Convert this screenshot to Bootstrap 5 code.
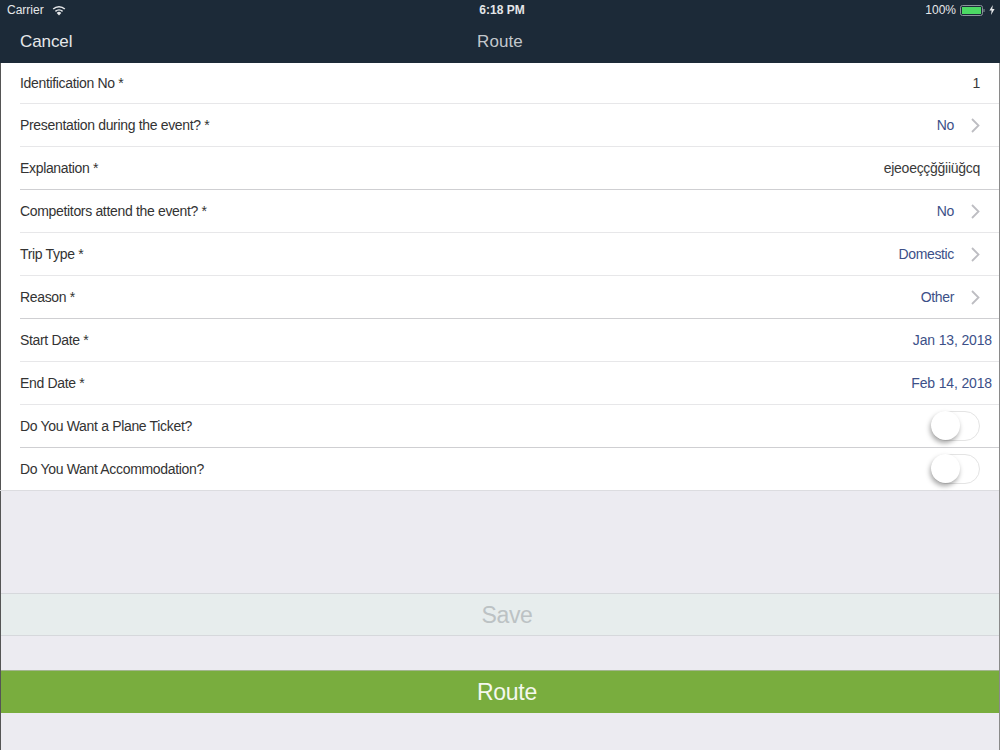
<!DOCTYPE html>
<html lang="en">
<head>
    <meta charset="UTF-8">
    <meta name="viewport" content="width=device-width, initial-scale=1.0">
    <title>Route</title>
    <link href="https://cdn.jsdelivr.net/npm/bootstrap@5.3.0/dist/css/bootstrap.min.css" rel="stylesheet">
    <style>
        html, body { height: 750px; overflow: hidden; }
        body {
            background: #ecebf1;
            font-family: "Liberation Sans", Arial, sans-serif;
            font-size: 14px;
            letter-spacing: -.33px;
            color: #333;
        }
        .app-frame {
            height: 750px;
            border-left: 1px solid #555;
            border-right: 1px solid #8a8a8a;
        }
        .top-bar { background: #1c2a38; color: #e6e8ea; margin-left: -1px; margin-right: -1px; }
        .status-row { height: 20px; font-size: 12px; padding: 0 5px 0 7px; letter-spacing: 0; }
        .status-col { flex: 1 1 0; }
        .clock { font-size: 12px; font-weight: 700; color: #e4e6e8; margin-left: 2px; }
        .title-row { height: 43px; padding: 0 20px; font-size: 17px; letter-spacing: -.1px; }
        .title-mid { color: #c2c7cc; letter-spacing: .1px; }
        .form-rows { background: #fff; }
        .form-line {
            height: 43px;
            margin-left: 19px;
            padding-right: 7px;
            border-bottom: 1px solid #e7e7e9;
        }
        .form-line > span { padding-top: 1px; }
        .form-line.strong-line { border-bottom-color: #cfcfd2; }
        .form-line.first-line { height: 41px; }
        .form-line.last-line { margin-left: -1px; padding-left: 20px; border-bottom-color: #dcdce0; }
        .val-blue { color: #3c5088; letter-spacing: -.15px; }
        .val-pick { letter-spacing: -.35px; }
        .val-dark { color: #3a3a3a; letter-spacing: -.28px; }
        .end-gap { margin-right: 12px; }
        .chev { margin-left: 17px; margin-right: 12px; margin-bottom: 1px; }
        .toggle-off {
            width: 49px;
            height: 30px;
            margin-right: 12px;
            border: 1.5px solid #e4e4e4;
            border-radius: 15px;
            position: relative;
        }
        .toggle-knob {
            position: absolute;
            left: -1px;
            top: -1px;
            width: 29px;
            height: 29px;
            border-radius: 50%;
            background: #fff;
            box-shadow: -1px 3px 5px rgba(0,0,0,.35);
        }
        .gap-area { height: 102px; }
        .save-bar {
            height: 43px;
            background: #e7eded;
            color: #bcc2c4;
            border-top: 1px solid #d6d8dc;
            border-bottom: 1px solid #d6d8dc;
            font-size: 23px;
            letter-spacing: -.3px;
            padding-left: 14px;
            padding-top: 2px;
        }
        .route-bar {
            height: 43px;
            margin-top: 34px;
            background: #79ad3e;
            color: #f4f8ee;
            border-top: 1px solid #a3b58f;
            font-size: 23px;
            letter-spacing: -.3px;
            padding-left: 14px;
        }
    </style>
</head>
<body>
    <div class="app-frame d-flex flex-column">
        <div class="top-bar">
            <div class="status-row d-flex align-items-center">
                <div class="status-col d-flex align-items-center gap-1">
                    <span>Carrier</span>
                    <svg class="ms-1" width="14" height="11" viewBox="0 0 14 11">
                        <path d="M7 10.5 L4.7 7.9 A3.4 3.4 0 0 1 9.3 7.9 Z" fill="#e6e8ea"/>
                        <path d="M3.4 6.4 A5.4 5.4 0 0 1 10.6 6.4" fill="none" stroke="#e6e8ea" stroke-width="1.5"/>
                        <path d="M1.2 4 A8.4 8.4 0 0 1 12.8 4" fill="none" stroke="#e6e8ea" stroke-width="1.5"/>
                    </svg>
                </div>
                <div class="clock">6:18 PM</div>
                <div class="status-col d-flex align-items-center justify-content-end">
                    <span>100%</span>
                    <svg class="ms-1" width="25" height="11" viewBox="0 0 25 11">
                        <rect x=".5" y=".5" width="22" height="10" rx="2" fill="none" stroke="#8a939b"/>
                        <rect x="2" y="2" width="19" height="7" fill="#4cd964"/>
                        <rect x="23.5" y="4" width="1" height="3" fill="#8a939b"/>
                    </svg>
                    <svg class="ms-1" width="6" height="10" viewBox="0 0 6 10">
                        <path d="M3.8 0 L0.4 5.6 H2.6 L2 10 L5.6 4 H3.3 Z" fill="#e6e8ea"/>
                    </svg>
                </div>
            </div>
            <div class="title-row d-flex align-items-center">
                <div class="status-col">Cancel</div>
                <div class="title-mid">Route</div>
                <div class="status-col"></div>
            </div>
        </div>

        <div class="form-rows">
            <div class="form-line first-line d-flex align-items-center justify-content-between">
                <span>Identification No *</span><span class="val-dark end-gap">1</span>
            </div>
            <div class="form-line d-flex align-items-center justify-content-between">
                <span>Presentation during the event? *</span>
                <span class="d-flex align-items-center val-blue val-pick">No
                    <svg class="chev" width="9" height="15" viewBox="0 0 9 15"><path d="M1 1 L7.5 7.5 L1 14" fill="none" stroke="#bdbdc2" stroke-width="1.8"/></svg>
                </span>
            </div>
            <div class="form-line strong-line d-flex align-items-center justify-content-between">
                <span>Explanation *</span><span class="val-dark end-gap">ejeoeççğğiiüğcq</span>
            </div>
            <div class="form-line d-flex align-items-center justify-content-between">
                <span>Competitors attend the event? *</span>
                <span class="d-flex align-items-center val-blue val-pick">No
                    <svg class="chev" width="9" height="15" viewBox="0 0 9 15"><path d="M1 1 L7.5 7.5 L1 14" fill="none" stroke="#bdbdc2" stroke-width="1.8"/></svg>
                </span>
            </div>
            <div class="form-line d-flex align-items-center justify-content-between">
                <span>Trip Type *</span>
                <span class="d-flex align-items-center val-blue val-pick">Domestic
                    <svg class="chev" width="9" height="15" viewBox="0 0 9 15"><path d="M1 1 L7.5 7.5 L1 14" fill="none" stroke="#bdbdc2" stroke-width="1.8"/></svg>
                </span>
            </div>
            <div class="form-line strong-line d-flex align-items-center justify-content-between">
                <span>Reason *</span>
                <span class="d-flex align-items-center val-blue val-pick">Other
                    <svg class="chev" width="9" height="15" viewBox="0 0 9 15"><path d="M1 1 L7.5 7.5 L1 14" fill="none" stroke="#bdbdc2" stroke-width="1.8"/></svg>
                </span>
            </div>
            <div class="form-line d-flex align-items-center justify-content-between">
                <span>Start Date *</span><span class="val-blue">Jan 13, 2018</span>
            </div>
            <div class="form-line d-flex align-items-center justify-content-between">
                <span>End Date *</span><span class="val-blue">Feb 14, 2018</span>
            </div>
            <div class="form-line strong-line d-flex align-items-center justify-content-between">
                <span>Do You Want a Plane Ticket?</span>
                <div class="toggle-off"><div class="toggle-knob"></div></div>
            </div>
            <div class="form-line last-line d-flex align-items-center justify-content-between">
                <span>Do You Want Accommodation?</span>
                <div class="toggle-off"><div class="toggle-knob"></div></div>
            </div>
        </div>

        <div class="gap-area"></div>
        <div class="save-bar d-flex align-items-center justify-content-center">Save</div>
        <div class="route-bar d-flex align-items-center justify-content-center">Route</div>
    </div>
    <script src="https://cdn.jsdelivr.net/npm/bootstrap@5.3.0/dist/js/bootstrap.bundle.min.js"></script>
</body>
</html>
